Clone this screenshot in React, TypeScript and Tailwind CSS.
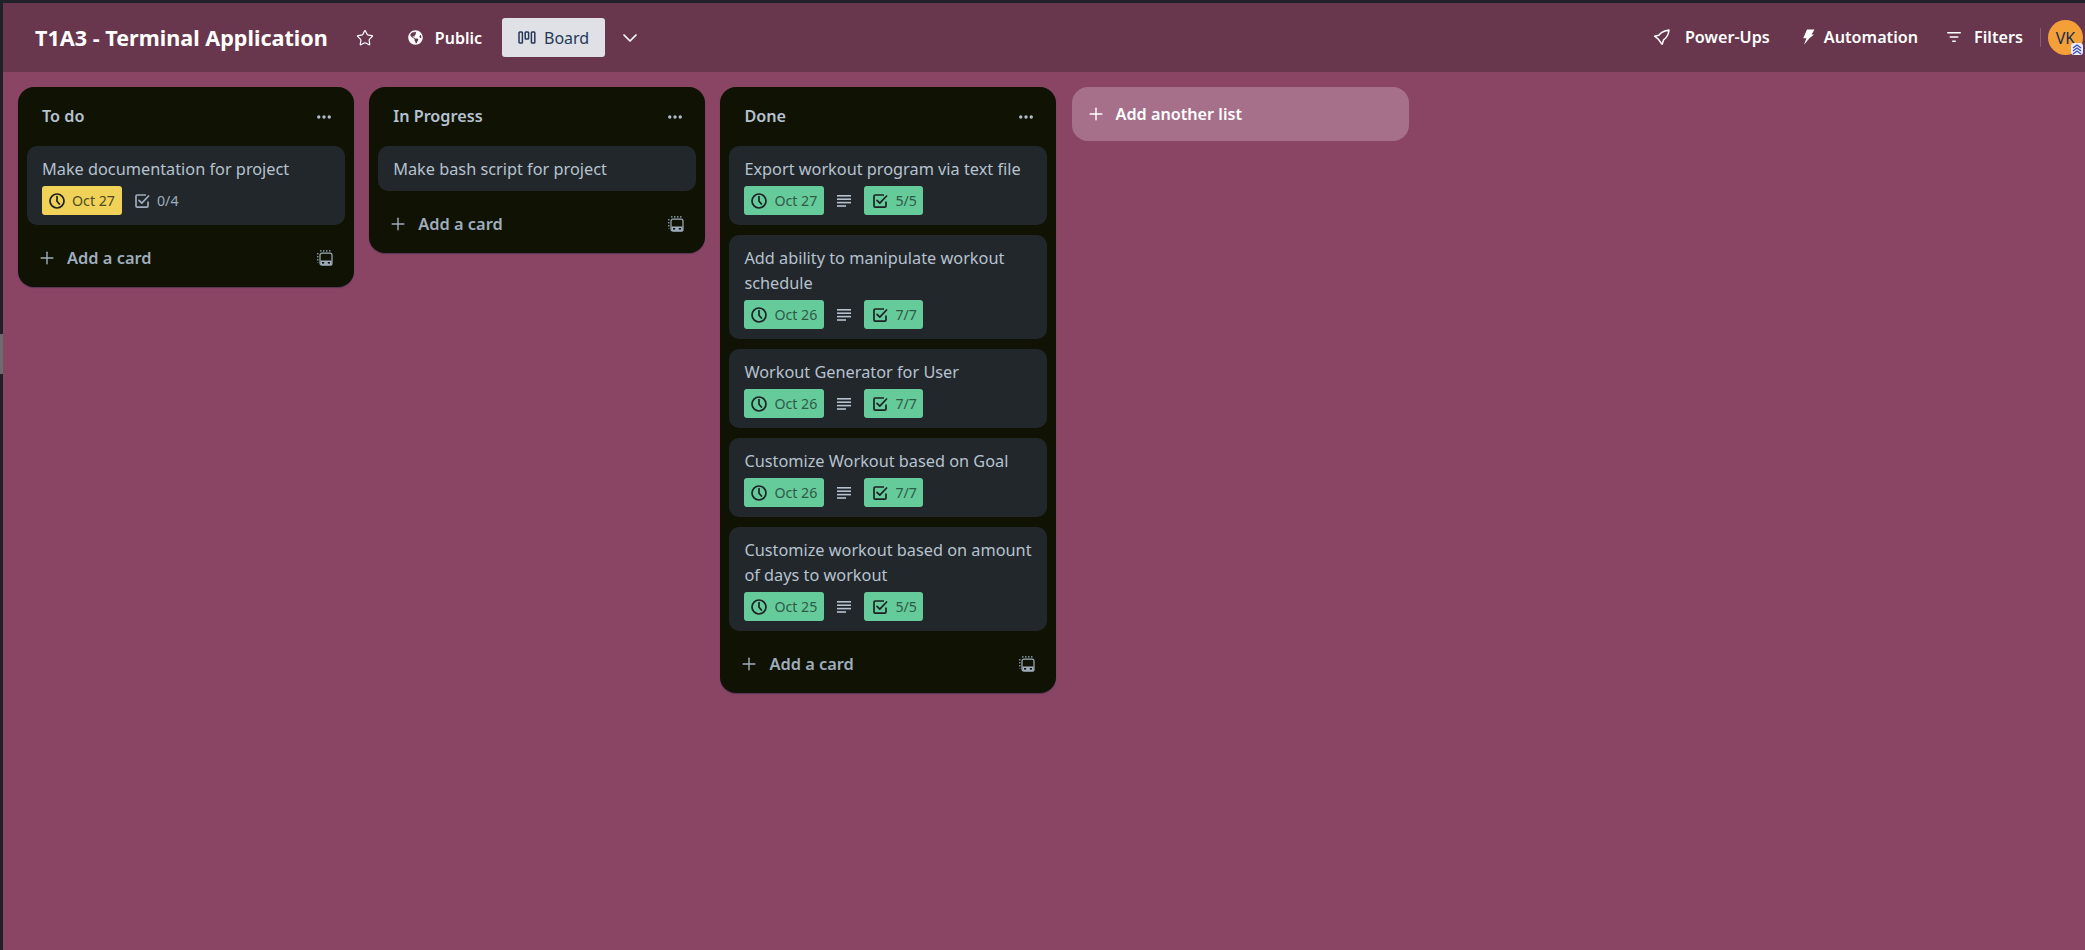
import React from 'react';
import { Star, ChevronDown, Plus, Ellipsis } from 'lucide-react';
import { FaGlobeAmericas } from 'react-icons/fa';

type Badge = { date: string; dateDone?: boolean; lines?: boolean; check: string };
type Card = { title: string; badge?: Badge };

const lists: { name: string; cards: Card[] }[] = [
  {
    name: 'To do',
    cards: [{ title: 'Make documentation for project', badge: { date: 'Oct 27', check: '0/4' } }],
  },
  { name: 'In Progress', cards: [{ title: 'Make bash script for project' }] },
  {
    name: 'Done',
    cards: [
      { title: 'Export workout program via text file', badge: { date: 'Oct 27', dateDone: true, lines: true, check: '5/5' } },
      { title: 'Add ability to manipulate workout schedule', badge: { date: 'Oct 26', dateDone: true, lines: true, check: '7/7' } },
      { title: 'Workout Generator for User', badge: { date: 'Oct 26', dateDone: true, lines: true, check: '7/7' } },
      { title: 'Customize Workout based on Goal', badge: { date: 'Oct 26', dateDone: true, lines: true, check: '7/7' } },
      { title: 'Customize workout based on amount of days to workout', badge: { date: 'Oct 25', dateDone: true, lines: true, check: '5/5' } },
    ],
  },
];

const ClockIcon = () => (
  <svg width="16" height="16" viewBox="0 0 16 16" fill="none" stroke="currentColor" strokeWidth="1.7">
    <circle cx="8" cy="8" r="7" />
    <path d="M8 3.6V8.2L10.4 11" strokeLinecap="round" strokeLinejoin="round" />
  </svg>
);

const CheckIcon = () => (
  <svg width="16" height="16" viewBox="0 0 16 16" fill="none" stroke="currentColor" strokeWidth="1.7">
    <path d="M14 8.5V13a1.2 1.2 0 0 1-1.2 1.2H3.2A1.2 1.2 0 0 1 2 13V3.2A1.2 1.2 0 0 1 3.2 2H12" />
    <path d="M5 7.4L7.8 10.2L14.6 3" strokeLinecap="round" strokeLinejoin="round" />
  </svg>
);

const LinesIcon = () => (
  <svg width="16" height="16" viewBox="0 0 16 16" fill="currentColor">
    <rect x="1" y="2" width="14" height="1.6" />
    <rect x="1" y="5.4" width="14" height="1.6" />
    <rect x="1" y="8.8" width="14" height="1.6" />
    <rect x="1" y="12.2" width="9" height="1.6" />
  </svg>
);

const TemplateIcon = () => (
  <svg width="16" height="16" viewBox="0 0 16 16" fill="none" stroke="currentColor" strokeWidth="1.2">
    <path d="M0.8 3V12.5" strokeDasharray="1.5 1.5" />
    <path d="M3 0.8H13.5" strokeDasharray="1.5 1.5" />
    <rect x="3" y="3.2" width="12" height="12" rx="2" />
    <path d="M3.4 10.6H14.6V13.6A1.4 1.4 0 0 1 13.2 15H4.8A1.4 1.4 0 0 1 3.4 13.6Z" fill="currentColor" stroke="none" />
    <rect x="5" y="12" width="2.2" height="1.6" fill="#101204" stroke="none" />
    <rect x="10.8" y="12" width="2.2" height="1.6" fill="#101204" stroke="none" />
  </svg>
);

const BoardIcon = () => (
  <svg width="18" height="14" viewBox="0 0 18 14" fill="none" stroke="currentColor" strokeWidth="1.5">
    <rect x="1" y="1" width="3.4" height="11" rx="0.8" />
    <rect x="7.2" y="1" width="3.4" height="7" rx="0.8" />
    <rect x="13.4" y="1" width="3.4" height="11" rx="0.8" />
  </svg>
);

const RocketIcon = () => (
  <svg width="18" height="18" viewBox="0 0 18 18" fill="none" stroke="currentColor" strokeWidth="1.5" strokeLinejoin="round">
    <path d="M16 2C11.5 2.6 8 4.4 5.8 7.2L1.6 8.2L5 10.8L7.6 14.4L9.2 16.2L10.6 11.8C13.8 9.6 15.6 6.4 16 2Z" />
  </svg>
);

const BoltIcon = () => (
  <svg width="13" height="16" viewBox="0 0 13 16" fill="currentColor">
    <path d="M5 0.5H12.5L9.6 5.4L12 5.6L7.2 9.6L2 15.8L4.4 9.2H1.2Z" />
  </svg>
);

const FilterIcon = () => (
  <svg width="16" height="16" viewBox="0 0 16 16" fill="currentColor">
    <rect x="1" y="3" width="14" height="1.6" rx="0.8" />
    <rect x="3.5" y="7.2" width="9" height="1.6" rx="0.8" />
    <rect x="6" y="11.4" width="4" height="1.6" rx="0.8" />
  </svg>
);

const HeaderLink = ({ icon, label, className }: { icon: React.ReactNode; label: string; className: string }) => (
  <div className={`flex items-center font-semibold text-white text-[16.2px] ${className}`}>
    {icon}
    <span>{label}</span>
  </div>
);

const CardBadges = ({ badge }: { badge: Badge }) => (
  <div className="mt-[5px] flex items-center h-[29px] text-[14.2px]">
    <div
      className={`flex items-center h-[29px] w-[80px] pl-[7px] rounded-[3px] gap-[7px] ${
        badge.dateDone ? 'bg-[#66cb9a] text-[#1d2125]' : 'bg-[#f0d258] text-[#1d2125]'
      }`}
    >
      <ClockIcon />
      <span className={badge.dateDone ? 'text-[#2f5a48]' : 'text-[#4f4a24]'}>{badge.date}</span>
    </div>
    {badge.lines && (
      <div className="ml-[12px] text-[#b6c2cf]">
        <LinesIcon />
      </div>
    )}
    {badge.dateDone ? (
      <div className="ml-[12px] flex items-center h-[29px] w-[59px] pl-[8px] gap-[7px] rounded-[3px] bg-[#66cb9a] text-[#1d2125]">
        <CheckIcon />
        <span className="text-[#2f5a48]">{badge.check}</span>
      </div>
    ) : (
      <div className="ml-[12px] flex items-center gap-[7px] text-[#9fadbc]">
        <CheckIcon />
        <span>{badge.check}</span>
      </div>
    )}
  </div>
);

const ListColumn = ({ name, cards }: { name: string; cards: Card[] }) => (
  <div className="w-[336px] shrink-0 rounded-[16px] bg-[#101204] shadow-[0_1px_1px_rgba(9,30,66,0.4)] px-[9px]">
    <div className="flex items-center justify-between h-[59px] pl-[15px] pr-[12px]">
      <span className="font-semibold text-[16.2px] text-[#b6c2cf]">{name}</span>
      <Ellipsis size={18} strokeWidth={2.5} className="text-[#b6c2cf]" />
    </div>
    <div className="flex flex-col gap-[10px]">
      {cards.map((c) => (
        <div key={c.title} className="rounded-[10px] bg-[#22272b] pl-[15px] pr-[8px] pt-[10px] pb-[10px] text-[16.3px] leading-[25px] text-[#b6c2cf]">
          <div className="translate-y-[1px]">{c.title}</div>
          {c.badge && <CardBadges badge={c.badge} />}
        </div>
      ))}
    </div>
    <div className="flex items-center justify-between h-[62px] pl-[10px] pr-[12px] pt-[4px] text-[#9fadbc]">
      <div className="flex items-center gap-[10px] font-semibold text-[16.4px]">
        <Plus size={20} strokeWidth={1.7} />
        <span>Add a card</span>
      </div>
      <TemplateIcon />
    </div>
  </div>
);

export default function App() {
  return (
    <div className="w-[2085px] h-[950px] overflow-hidden flex bg-[#1f2028] font-['Noto_Sans','Open_Sans',sans-serif]">
      <div className="w-[3px] shrink-0 flex flex-col">
        <div className="h-[334px]" />
        <div className="h-[40px] bg-[#6b6b70]" />
      </div>
      <div className="flex-1 flex flex-col mt-[3px] bg-[#8a4565] min-w-0">
        <header className="h-[69px] shrink-0 bg-[#68374d] flex items-center justify-between pr-[2px]">
          <div className="flex items-center text-white">
            <h1 className="ml-[32px] font-bold text-[21.6px] leading-none whitespace-nowrap">T1A3 - Terminal Application</h1>
            <Star size={18} strokeWidth={1.6} className="ml-[28px]" />
            <FaGlobeAmericas size={15} className="ml-[34px]" />
            <span className="ml-[12px] font-semibold text-[16px]">Public</span>
            <div className="ml-[20px] flex items-center w-[103px] h-[39px] rounded-[3px] bg-[#dfe1e6] text-[#253858] pl-[16px] gap-[8px]">
              <BoardIcon />
              <span className="text-[16px]">Board</span>
            </div>
            <ChevronDown size={24} strokeWidth={1.7} className="ml-[13px]" />
          </div>
          <div className="flex items-center">
            <HeaderLink icon={<RocketIcon />} label="Power-Ups" className="gap-[14px]" />
            <HeaderLink icon={<BoltIcon />} label="Automation" className="gap-[9px] ml-[32px]" />
            <HeaderLink icon={<FilterIcon />} label="Filters" className="gap-[12px] ml-[28px]" />
            <div className="ml-[17px] w-px h-[19px] bg-[#8a5a70]" />
            <div className="relative ml-[7px] w-[35px] h-[35px] rounded-full bg-[#f4a038] flex items-center justify-center text-[#172b4d] text-[16px]">
              VK
              <svg width="12" height="12" viewBox="0 0 12 12" className="absolute right-0 bottom-0" fill="none" stroke="#3d4fb8" strokeWidth="1.4">
                <rect width="12" height="12" rx="3" fill="#e8ebfa" stroke="none" />
                <path d="M2 5L6 2L10 5M2 8L6 5L10 8M2 11L6 8L10 11" />
              </svg>
            </div>
          </div>
        </header>
        <main className="flex items-start gap-[15.2px] pt-[15px] pl-[15px]">
          {lists.map((l) => (
            <ListColumn key={l.name} name={l.name} cards={l.cards} />
          ))}
          <div className="w-[337px] shrink-0 h-[54px] rounded-[16px] bg-[#a6708a] flex items-center gap-[10px] pl-[14px] font-semibold text-[16.2px] text-white">
            <Plus size={20} strokeWidth={1.7} />
            <span>Add another list</span>
          </div>
        </main>
      </div>
    </div>
  );
}
